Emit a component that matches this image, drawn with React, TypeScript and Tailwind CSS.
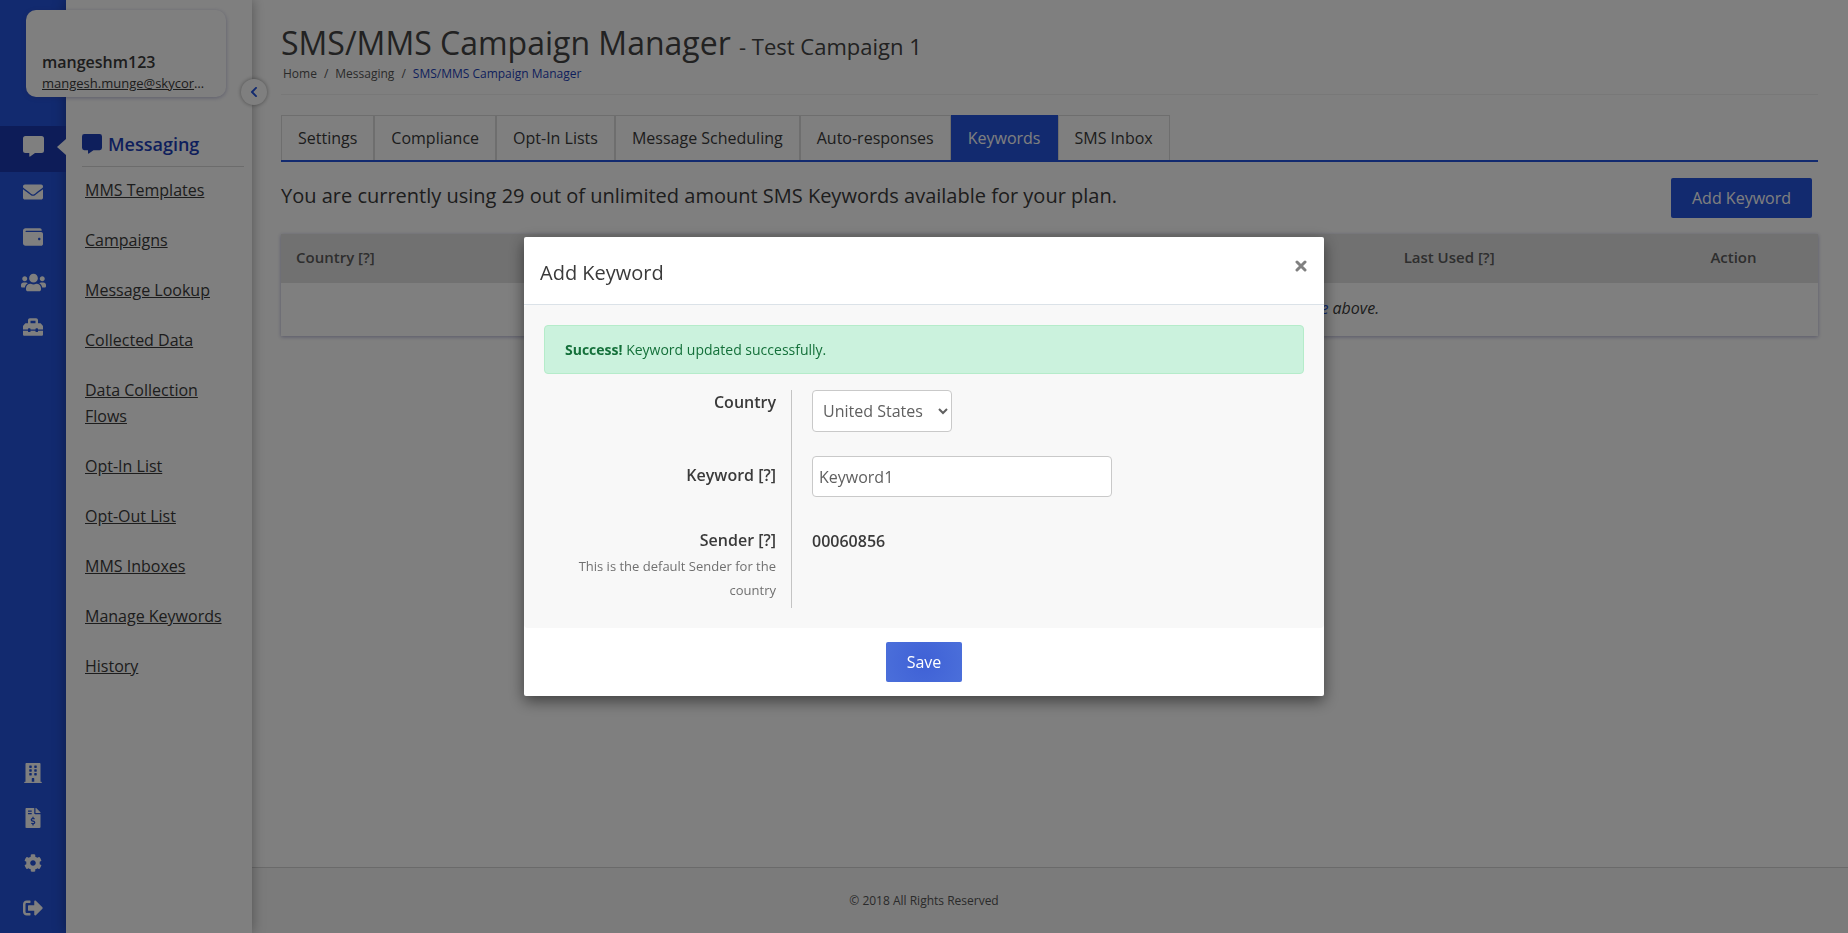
import type { ReactNode } from "react";
import {
  FaBuilding,
  FaChevronLeft,
  FaCog,
  FaEnvelope,
  FaFileInvoiceDollar,
  FaSignOutAlt,
  FaToolbox,
  FaUsers,
  FaWallet,
} from "react-icons/fa";

const menu = [
  "MMS Templates",
  "Campaigns",
  "Message Lookup",
  "Collected Data",
  "Data Collection Flows",
  "Opt-In List",
  "Opt-Out List",
  "MMS Inboxes",
  "Manage Keywords",
  "History",
];

const tabs = [
  "Settings",
  "Compliance",
  "Opt-In Lists",
  "Message Scheduling",
  "Auto-responses",
  "Keywords",
  "SMS Inbox",
];

function MessageIcon({ size }: { size: number }) {
  return (
    <svg width={size} height={size} viewBox="0 0 21 21" fill="currentColor" aria-hidden="true">
      <path d="M2.5 0h16A2.5 2.5 0 0 1 21 2.5v12a2.5 2.5 0 0 1-2.5 2.5H12l-4.8 3.6c-.4.3-.9 0-.9-.4V17H2.5A2.5 2.5 0 0 1 0 14.5v-12A2.5 2.5 0 0 1 2.5 0z" />
    </svg>
  );
}

function RailLink({ label, active, children }: { label: string; active?: boolean; children: ReactNode }) {
  return (
    <a
      href="#"
      aria-label={label}
      className={
        active
          ? "relative flex h-[46px] justify-center bg-[#1a39b0] pt-[10px] text-white"
          : "relative flex h-[45px] justify-center pt-[10px] text-white"
      }
    >
      <span className="flex h-5 items-center">{children}</span>
      {active && (
        <span className="absolute right-0 top-[13px] border-y-8 border-r-[9px] border-y-transparent border-r-white" />
      )}
    </a>
  );
}

function Sidebar() {
  return (
    <aside className="relative flex w-[252px] shrink-0">
      <nav className="flex w-[66px] shrink-0 flex-col justify-between bg-[#2454de] pt-[126px]">
        <div>
          <RailLink label="Messaging" active>
            <MessageIcon size={21} />
          </RailLink>
          <RailLink label="Email">
            <FaEnvelope size={20} />
          </RailLink>
          <RailLink label="Wallet">
            <FaWallet size={20} />
          </RailLink>
          <RailLink label="Contacts">
            <FaUsers size={25} />
          </RailLink>
          <RailLink label="Tools">
            <FaToolbox size={20} />
          </RailLink>
        </div>
        <div>
          <RailLink label="Company">
            <FaBuilding size={20} />
          </RailLink>
          <RailLink label="Billing">
            <FaFileInvoiceDollar size={20} />
          </RailLink>
          <RailLink label="Settings">
            <FaCog size={18} />
          </RailLink>
          <RailLink label="Sign out">
            <FaSignOutAlt size={20} />
          </RailLink>
        </div>
      </nav>

      <div className="flex-1 pl-4 pr-2 pt-[129px] shadow-[0_0_12px_rgba(0,0,0,0.35)]">
        <h2 className="flex items-center gap-[6px] border-b border-[#d8d8d8] pb-[7px] text-[18px] font-semibold leading-[30px] text-[#1d3fb8]">
          <MessageIcon size={20} />
          Messaging
        </h2>
        <ul className="mt-[10px] flex flex-col gap-6 pl-[3px] pr-5 text-[16px] leading-[26px]">
          {menu.map((item) => (
            <li key={item}>
              <a href="#" className="underline">
                {item}
              </a>
            </li>
          ))}
        </ul>
      </div>

      <div className="absolute left-[26px] top-[10px] w-[200px] rounded-[10px] bg-white px-4 pb-1 pt-[40px] shadow-[0_1px_4px_rgba(60,60,140,0.35)]">
        <p className="text-[16px] font-semibold leading-6">mangeshm123</p>
        <a href="#" className="block truncate text-[13px] leading-[19px] underline">
          mangesh.munge@skycore.com
        </a>
      </div>

      <button
        type="button"
        aria-label="Collapse menu"
        className="absolute left-[241px] top-[79px] flex size-[26px] items-center justify-center rounded-full bg-white text-[#2454de] shadow-[0_0_4px_rgba(0,0,0,0.4)]"
      >
        <FaChevronLeft size={12} />
      </button>
    </aside>
  );
}

function Main() {
  return (
    <div className="flex min-w-0 flex-1 flex-col">
      <main className="flex-1 pl-[29px] pr-[30px] pt-[23px]">
        <header className="border-b border-[#f0f0f0] pb-3">
          <h1 className="text-[32px] leading-10 text-[#444]">
            SMS/MMS Campaign Manager <small className="text-[22px] leading-8">- Test Campaign 1</small>
          </h1>
          <nav aria-label="Breadcrumb" className="flex gap-[7px] pl-[2px] pt-[3px] text-[12px] leading-4 text-[#555]">
            <a href="#">Home</a>
            <span>/</span>
            <a href="#">Messaging</a>
            <span>/</span>
            <a href="#" className="text-[#1d3fb8]">
              SMS/MMS Campaign Manager
            </a>
          </nav>
        </header>

        <nav className="mt-5 flex border-b-2 border-[#2454de] text-[16px] leading-[44px]">
          {tabs.map((tab) => (
            <a
              key={tab}
              href="#"
              className={
                tab === "Keywords"
                  ? "border border-b-0 border-[#2454de] bg-[#2454de] px-4 text-white"
                  : "border border-b-0 border-[#dcdcdc] px-4"
              }
            >
              {tab}
            </a>
          ))}
        </nav>

        <div className="my-4 flex items-start justify-between pr-[6px]">
          <p className="pt-1 text-[20px] leading-[28px]">
            You are currently using 29 out of unlimited amount SMS Keywords available for your plan.
          </p>
          <button type="button" className="h-10 rounded-[2px] bg-[#2454de] px-[21px] text-[16px] text-white">
            Add Keyword
          </button>
        </div>

        <table className="w-full border-collapse text-[16px] leading-6 shadow-[0_1px_4px_rgba(60,60,140,0.4)]">
          <thead>
            <tr className="h-[49px] bg-[#e3e3e3] text-left text-[15px] text-[#5c5c5c]">
              <th className="w-[18%] px-[15px] pb-1 font-semibold">Country [?]</th>
              <th className="px-[15px] pb-1 font-semibold" />
              <th className="w-[26%] px-[15px] pb-1 text-center font-semibold">Last Used [?]</th>
              <th className="w-[11%] px-[15px] pb-1 text-center font-semibold">Action</th>
            </tr>
          </thead>
          <tbody>
            <tr className="h-[53px]">
              <td colSpan={4} className="pb-1 text-center italic">
                There are no keywords set up in this campaign at the moment. You can add a{" "}
                <a href="#" className="text-[#2454de]">
                  new one
                </a>{" "}
                above.
              </td>
            </tr>
          </tbody>
        </table>
      </main>
      <footer className="border-t border-[#d5d5d5] bg-[#f6f6f6] py-[23px] pr-[252px] text-center text-[12px] leading-[19px] text-[#555]">
        © 2018 All Rights Reserved
      </footer>
    </div>
  );
}

function KeywordDialog() {
  return (
    <div className="fixed inset-0 flex items-start justify-center bg-black/50 pt-[237px]">
      <section
        role="dialog"
        aria-modal="true"
        aria-labelledby="dialog-title"
        className="w-[800px] rounded-[2px] bg-white shadow-[0_5px_15px_rgba(0,0,0,0.5)]"
      >
        <header className="flex items-start justify-between border-b border-[#dbe2e8] px-4 pb-[18px] pt-[19px]">
          <h2 id="dialog-title" className="pt-[3px] text-[20px] leading-[27px]">
            Add Keyword
          </h2>
          <button type="button" aria-label="Close" className="flex h-5 items-center text-[#808080]">
            <svg width="14" height="12" viewBox="0 0 14 12" aria-hidden="true">
              <path d="M3 2l8 8M11 2l-8 8" stroke="currentColor" strokeWidth="3" strokeLinecap="round" />
            </svg>
          </button>
        </header>

        <form>
          <div className="rounded-[4px] bg-[#f8f8f8] p-5">
            <p className="mb-4 rounded-[4px] border border-[#b5ecca] bg-[#cbf2dd] px-5 py-3 text-[14px] leading-[23px] text-[#14703a]">
              <strong>Success!</strong> Keyword updated successfully.
            </p>
            <div className="flex">
              <div className="flex w-[248px] flex-col border-r border-[#c4c4c4] pr-[15px] text-right text-[16px] font-semibold leading-6">
                <label htmlFor="country" className="mb-[49px]">
                  Country
                </label>
                <label htmlFor="keyword" className="mb-[41px]">
                  Keyword [?]
                </label>
                <span>Sender [?]</span>
                <p className="pb-[6px] pl-6 pt-[2px] text-[13px] font-normal leading-6 text-[#707070]">
                  This is the default Sender for the country
                </p>
              </div>
              <div className="flex flex-1 flex-col items-start pl-5 text-[16px]">
                <select
                  id="country"
                  defaultValue="United States"
                  className="mb-6 h-[42px] w-[140px] rounded-[4px] border border-[#c9c9c9] bg-white px-[6px] text-[#606060]"
                >
                  <option>United States</option>
                </select>
                <input
                  id="keyword"
                  type="text"
                  defaultValue="Keyword1"
                  className="mb-8 h-[41px] w-[300px] rounded-[4px] border border-[#c9c9c9] bg-white px-[6px] text-[#606060]"
                />
                <strong className="font-semibold leading-6">00060856</strong>
              </div>
            </div>
          </div>
          <footer className="flex justify-center py-[14px]">
            <button
              type="button"
              className="h-10 rounded-[2px] bg-[radial-gradient(circle,#3f61d6,#4b6fda)] px-[21px] text-[16px] text-white"
            >
              Save
            </button>
          </footer>
        </form>
      </section>
    </div>
  );
}

export default function App() {
  return (
    <div className="flex min-h-screen bg-white font-['Open_Sans',sans-serif] text-[#3a3a3a]">
      <Sidebar />
      <Main />
      <KeywordDialog />
    </div>
  );
}
